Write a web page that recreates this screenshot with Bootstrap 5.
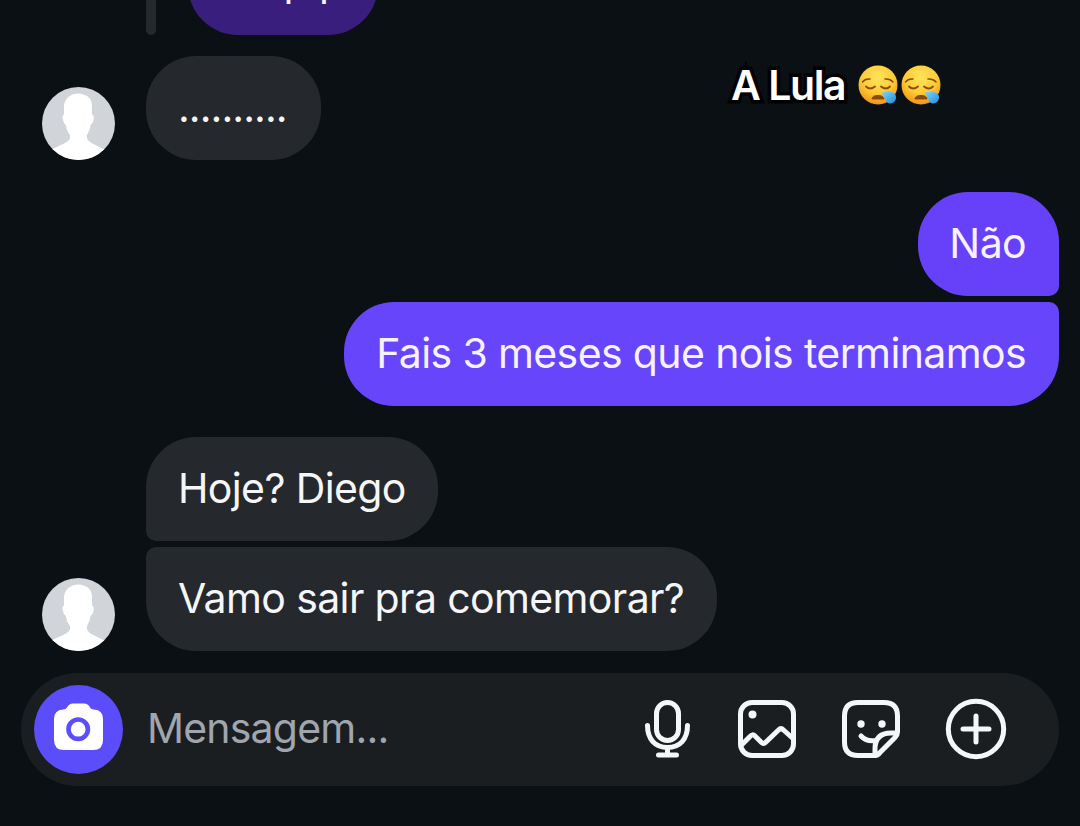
<!DOCTYPE html>
<html lang="pt-BR">
<head>
<meta charset="utf-8">
<meta name="viewport" content="width=device-width, initial-scale=1">
<title>Conversa</title>
<link rel="stylesheet" href="https://cdn.jsdelivr.net/npm/bootstrap@5.3.0/dist/css/bootstrap.min.css">
<style>
body{background:#0b1014;font-family:Inter,"Liberation Sans",sans-serif;height:826px;overflow:hidden}
.screen{width:1080px;height:826px;overflow:hidden}
.thread{padding:0 21px 0 42px}
.bubble{height:104px;border-radius:50px;padding:0 32px 1px;font-size:41px;letter-spacing:-.62px;line-height:1;color:#f5f6f8;background:#25282d;white-space:nowrap;display:flex;align-items:center}
.mine{background:#6741fa;color:#f7f2ff;padding-right:33px}
.first-mine{border-bottom-right-radius:10px;padding-left:31px}
.last-mine{border-top-right-radius:10px;background:#6645fa}
.first-theirs{border-bottom-left-radius:10px}
.last-theirs{border-top-left-radius:10px;padding-right:33px}
.quoted{height:35px;padding-left:104px;gap:32px}
.quote-bar{width:10px;height:60px;border-radius:5px;background:#25282d}
.quoted .bubble{width:190px;background:#3a1e7d;justify-content:center;padding:0 0 4px 61px}
.avatar{width:73px;height:73px;flex:none}
.after-avatar{margin-left:31px}
.dotted{width:175px;letter-spacing:-.95px}
.reply{margin-top:21px}
.turn{margin-top:32px}
.turn-last{margin-top:31px}
.stack{gap:6px}
.caption{left:731px;top:60px;font-weight:600;font-size:41px;line-height:50px;color:#fff;white-space:nowrap}
.caption-words{letter-spacing:-1.45px;-webkit-text-stroke:7px #000;paint-order:stroke fill;stroke-linejoin:round}
.composer{width:1038px;height:113px;margin:22px 0 0 21px;border-radius:57px;background:#1b1e20;padding:0 52px 0 13px}
.cam{width:89px;height:89px;background:#5b4efa}
.hint{font-size:41px;letter-spacing:-.8px;line-height:1;color:#a0a5ae;margin-left:24px;padding-bottom:2px}
.tools{gap:44px;padding-bottom:2px}
</style>
</head>
<body>
<svg width="0" height="0" class="position-absolute" aria-hidden="true">
  <defs>
    <radialGradient id="face" cx=".5" cy=".3" r=".75"><stop offset="0" stop-color="#ffe45c"/><stop offset=".55" stop-color="#ffcb35"/><stop offset="1" stop-color="#ee8a12"/></radialGradient>
    <linearGradient id="drop" x1="0" y1="0" x2="1" y2="1"><stop offset="0" stop-color="#87d9fb"/><stop offset="1" stop-color="#1b8ce0"/></linearGradient>
    <clipPath id="round"><circle cx="36.5" cy="36.5" r="36.5"/></clipPath>
    <symbol id="person" viewBox="0 0 73 73">
      <g clip-path="url(#round)"><rect width="73" height="73" fill="#d1d4d9"/>
      <path fill="#fff" d="M36.500 6.500C40 6.500 42 8 44 8.500C49 11 50 15 50 20V27.500C53 28 52 36 48.500 38C48 43 46.500 45 45 48V51C46 56 55 58 63 63V75H9V63C17 58 27 56 28 51V48C26 45 24.500 43 24 38C20.500 36 19.500 28 22 27.500V20C22 12 28 6.500 36.500 6.500Z"/></g>
    </symbol>
    <symbol id="sleepy" viewBox="0 0 40 40">
      <circle cx="20" cy="20" r="19.500" fill="url(#face)"/>
      <g fill="none" stroke="#8a4a0d" stroke-width="1.800" stroke-linecap="round">
      <path d="M4.500 17Q7 13.500 12 14M27 14Q32 13.500 35 17" stroke-width="1.500"/>
      <path d="M8 21.500Q12 25.500 17 21.500M23 21.500Q28 25.500 32 21.500"/></g>
      <path d="M14 34Q14 30.500 20 30.500T26 34Z" fill="#8a4a0d" stroke="#8a4a0d"/>
      <path d="M23 28C27 26 34 25.500 37 29C40 34 36 39 31.500 38.500C27 38 28 32 23 28Z" fill="url(#drop)"/>
    </symbol>
  </defs>
</svg>
<main class="screen position-relative">
  <div class="thread d-flex flex-column">
    <div class="quoted d-flex align-items-end">
      <div class="quote-bar"></div>
      <div class="bubble">p&nbsp;p</div>
    </div>
    <div class="reply d-flex align-items-end">
      <svg class="avatar"><use href="#person"/></svg>
      <div class="bubble dotted after-avatar">..........</div>
    </div>
    <div class="turn stack d-flex flex-column align-items-end">
      <div class="bubble mine first-mine">Não</div>
      <div class="bubble mine last-mine">Fais 3 meses que nois terminamos</div>
    </div>
    <div class="turn-last d-flex align-items-end">
      <svg class="avatar"><use href="#person"/></svg>
      <div class="stack after-avatar d-flex flex-column align-items-start">
        <div class="bubble first-theirs">Hoje? Diego</div>
        <div class="bubble last-theirs">Vamo sair pra comemorar?</div>
      </div>
    </div>
  </div>
  <div class="composer d-flex align-items-center">
    <div class="cam rounded-circle d-flex align-items-center justify-content-center flex-shrink-0">
      <svg width="89" height="89" viewBox="0 0 89 89"><path fill="#fff" d="M33 22.500Q35 18.500 39 18.500H50Q54 18.500 56 22.500Q57 24.500 60 24.500Q69 25 69 34V55Q69 65 59 65H30Q20 65 20 55V34Q20 25 29 24.500Q32 24.500 33 22.500Z"/><circle cx="44.200" cy="44.200" r="9.700" fill="#fff" stroke="#5b4efa" stroke-width="4.600"/></svg>
    </div>
    <span class="hint">Mensagem...</span>
    <div class="tools d-flex align-items-center ms-auto">
      <svg width="50" height="60" viewBox="0 0 50 60" fill="none" stroke="#f5f6f7" stroke-width="5" stroke-linecap="round"><rect x="13.500" y="3.500" width="22" height="38" rx="11"/><path d="M4.500 26.500C4.500 40 12 48.500 24.500 48.500S44.500 40 44.500 26.500M24.500 49V55M15.500 56H33.500"/></svg>
      <svg width="60" height="60" viewBox="0 0 60 60" fill="none" stroke="#f5f6f7" stroke-width="5" stroke-linejoin="round"><rect x="3.500" y="3.500" width="53" height="53" rx="11.500"/><circle cx="15.500" cy="15.500" r="4" fill="#f5f6f7" stroke="none"/><path d="M4 46.500L13 37.500Q15.500 34.500 18 37L24.500 43.500Q26.500 45.500 28.500 43.500L41.500 31Q44 28.500 46.500 31L56 39.500"/></svg>
      <svg width="60" height="60" viewBox="0 0 60 60" fill="none" stroke="#f5f6f7" stroke-width="5" stroke-linecap="round" stroke-linejoin="round"><path d="M35 56.500H17Q3.500 56.500 3.500 43V17Q3.500 3.500 17 3.500H43Q56.500 3.500 56.500 17V33Q56.500 36 54 38.500L39 53.500Q37 56.500 34 56.500V50Q34 34 50 34H55M20 37Q25.500 43 35 41.500" /><circle cx="20" cy="25" r="3.700" fill="#f5f6f7" stroke="none"/><circle cx="41" cy="25" r="3.700" fill="#f5f6f7" stroke="none"/></svg>
      <svg width="62" height="62" viewBox="0 0 62 62" fill="none" stroke="#f5f6f7" stroke-width="5" stroke-linecap="round"><circle cx="31" cy="31" r="27.700"/><path d="M31 18V44M18 31H44"/></svg>
    </div>
  </div>
  <div class="caption position-absolute d-flex align-items-center">
    <span class="caption-words">A Lula</span>
    <svg width="40" height="40" style="margin-left:13px"><use href="#sleepy"/></svg>
    <svg width="40" height="40" style="margin-left:3px"><use href="#sleepy"/></svg>
  </div>
</main>
<script src="https://cdn.jsdelivr.net/npm/bootstrap@5.3.0/dist/js/bootstrap.bundle.min.js"></script>
</body>
</html>
